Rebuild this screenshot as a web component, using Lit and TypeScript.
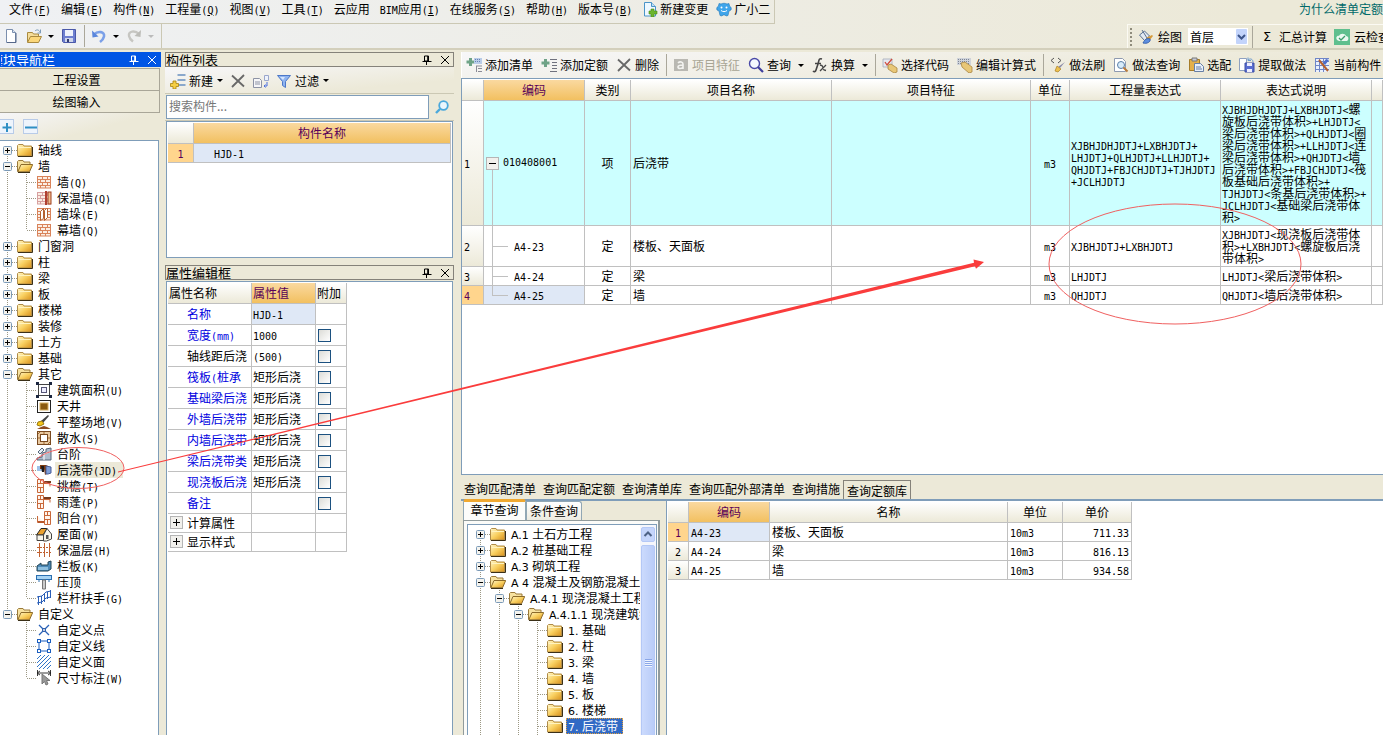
import { LitElement, html, svg, css, nothing, TemplateResult } from "lit";
import { customElement, state } from "lit/decorators.js";

type Glyph = TemplateResult<2>;

const brick = (c: string) => svg`<rect x="1" y="2" width="14" height="12" fill="#fbeee4"/><path d="M1 2.500h14M1 5.500h14M1 8.500h14M1 11.500h14M1 14h14M1.500 2v12M14.500 2v12M6.500 3v2M11.500 3v2M4.500 6v2M9.500 6v2M6.500 9v2M11.500 9v2M4.500 12v2M9.500 12v2" stroke=${c} fill="none"/>`;

const GLYPHS: Record<string, Glyph> = {
  folder: svg`<path d="M.5 3.500l1-1h4.500l1 1.500h7.500v10H.5z" fill="url(#gold)" stroke="#b08c48"/><path d="M1.500 5.500h12.500" stroke="#fff3bf"/><path d="M1 14.500h14.500V5" stroke="#3b3018" fill="none"/>`,
  folderOpen: svg`<path d="M.5 13.500V3.500l1-1h4.500l1 1.500h6v2.500" fill="#f7e2a0" stroke="#9b7a3a"/><path d="M.8 13.800l3.200-7.300h11.700l-3.200 7.300z" fill="url(#gold)" stroke="#8b6a2a"/><path d="M1 14.500h12" stroke="#3b3018"/>`,
  brick: brick("#d9835a"),
  brickWarm: svg`${brick("#d7a0a0")}<rect x="9" y="1" width="2" height="14" fill="#b04030"/><rect x="12" y="2" width="3" height="12" fill="#f0c090" stroke="#a04020"/>`,
  pier: svg`${brick("#d9835a")}<path d="M4.500 5.500l3-3v10l-3 2zM8.500 4.500l2-2h1v9l-3 3z" fill="#fff" stroke="#b5602f"/>`,
  area: svg`<rect x="2.500" y="2.500" width="11" height="11" fill="#fff" stroke="#444"/><rect x="5.500" y="5.500" width="5" height="5" fill="#eef" stroke="#557"/><path d="M0 0h3v3H0zM13 0h3v3h-3zM0 13h3v3H0zM13 13h3v3h-3z" fill="#1b2640"/>`,
  court: svg`<rect x="1.500" y="2.500" width="13" height="12" fill="#fff" stroke="#222"/><rect x="4" y="5" width="8" height="7" fill="#8a5a10" stroke="#d8b060"/>`,
  ground: svg`<path d="M5 7l7-6 1 1-6 7z" fill="#444"/><path d="M2 8l4-1 2 3-4 2-3-1z" fill="#f5c518" stroke="#9a7a10"/><path d="M1 15l4-2 3-1 3 1 4 2z" fill="#8c4a20"/>`,
  apron: svg`<rect x="1.500" y="1.500" width="13" height="13" fill="#e8c8a0" stroke="#7a4a20"/><rect x="4.500" y="4.500" width="7" height="7" fill="#fff" stroke="#7a4a20"/><path d="M2 4l2-2M2 8h2M12 8h2M8 2v2M8 12v2M12 14l2-2" stroke="#a06a30"/>`,
  steps: svg`<path d="M1 12l5-1V7l4-1V3l5-1v12H1z" fill="#aebccc" stroke="#56677a"/><path d="M2 6l4-4 2 2-4 4z" fill="#e6edf4" stroke="#56677a"/><path d="M8 14V8l6-2" stroke="#fff" fill="none"/>`,
  strip: svg`<path d="M1 4h5v5H1z" fill="#9fc0e8"/><path d="M4 3h6l2 1v7l-3 2-1-6H4z" fill="#7b3b12"/><path d="M5 4h3v6H6z" fill="#1f1a1a"/><path d="M10 4l5 1v6l-3 1H10z" fill="#7f9fd8" stroke="#4a5f98"/>`,
  eave: svg`<path d="M1.500 1.500h6v13h-6zM1 5.500h7M1 9.500h7M4.500 2v3M4.500 10v4M8 3.500h6M8 5.500h6v3" fill="#fff4ec" stroke="#c8683a"/><path d="M8 3h7v2H8z" fill="#7a3a1a"/>`,
  balcony: svg`<path d="M8.500 1.500h6v13h-6zM8 5.500h7M8 9.500h7M11.500 2v3M11.500 10v4M1.500 6v6.500H8" fill="#fff4ec" stroke="#c8683a"/><path d="M2 11h6v2H2z" fill="#b8572a"/>`,
  roof: svg`<path d="M.5 9L5 2.500h6L7 9z" fill="#e9a030" stroke="#222"/><path d="M7.500 9l3.500-6.500L15.500 8v5l-5 2H7.500zM1 9v5.500h6.500V9z" fill="#f7f4ea" stroke="#444"/><rect x="10" y="9" width="2.500" height="4" fill="#555"/>`,
  insul: svg`<path d="M3.500 1v14M8.500 1v14M13.500 1v14" stroke="#c06030"/><path d="M1 5.500h14M1 10.500h14" stroke="#c06030" stroke-dasharray="2 1"/>`,
  slab: svg`<path d="M1 8l4-3v2h7V4l3-1v8l-3 2H1z" fill="#4d8ab8" stroke="#245"/><path d="M2 9h10v3H2z" fill="#8fc0e0"/>`,
  cap: svg`<rect x=".5" y="1.500" width="15" height="4" fill="#a8d4f4" stroke="#2b6fb0"/><path d="M6.500 6h3v9h-3z" fill="#ccc" stroke="#777"/><path d="M3 6v2M13 6v2" stroke="#2b6fb0"/>`,
  rail: svg`<path d="M1 7l5-1 4-4 5-1M1 13l5-1 4-4 5-1M2.500 6v9M5.500 6v8M8.500 4v8M11.500 2v7M14.500 0v8" fill="none" stroke="#2b5fb8"/>`,
  point: svg`<path d="M3 3l10 10M13 3L3 13" stroke="#2a62b8" stroke-width="1.300"/><circle cx="8" cy="8" r="1.500" fill="#fff" stroke="#1c4fa0"/>`,
  line: svg`<rect x="3" y="3" width="10" height="10" fill="none" stroke="#1c5fc0"/><path d="M1 1h4v4H1zM11 1h4v4h-4zM1 11h4v4H1zM11 11h4v4h-4z" fill="#1c5fc0"/><path d="M2 2h2v2H2zM12 2h2v2h-2zM2 12h2v2H2zM12 12h2v2h-2z" fill="#fff"/>`,
  face: svg`<path d="M1 5l4-4M1 9l8-8M1 13l12-12M3 15L15 3M7 15l8-8M11 15l4-4" stroke="#2f74c8"/>`,
  dim: svg`<path d="M1.500 0v6M14.500 0v6M1 3h14M1 3l3-2M1 3l3 2M15 3l-3-2M15 3l-3 2" stroke="#222" stroke-width=".9"/><path d="M6 4v10l2.500-2.500L10 15l2-1-1.500-3.500H14z" fill="#999" stroke="#777"/>`,
  page: svg`<path d="M3.500 1.500h6l3 3v10h-9z" fill="#fff" stroke="#7b8fae"/><path d="M9.500 1.500v3h3" fill="#dce6f4" stroke="#7b8fae"/><path d="M4 14.500h9V5" stroke="#56688a" fill="none"/>`,
  open: svg`<path d="M1.500 14V4.500h5l1 1.500h5v2" fill="#f5dd9a" stroke="#a98a40"/><path d="M1.500 14.500l3-6h11l-3 6z" fill="#fbd77a" stroke="#a98a40"/><path d="M9 3c2-2 4-1 5 1M14.500 1.500V5h-3" fill="none" stroke="#7a9ab8"/>`,
  save: svg`<path d="M1.500 1.500h13v13h-12l-1-1z" fill="#6d7fd0" stroke="#4a58a8"/><rect x="4" y="2" width="8" height="6" fill="#eef2fb"/><rect x="4" y="10" width="8" height="4" fill="#cfd6ea"/><rect x="6" y="11" width="2" height="3" fill="#333c70"/>`,
  undo: svg`<path d="M3 6.500c4-4 11-3 10 2-.5 2.500-2 4-4 5.500" fill="none" stroke="#7ba0e8" stroke-width="2.600"/><path d="M1 2.500l.5 7 6-1z" fill="#5a86dc"/>`,
  redo: svg`<path d="M13 6C9 2 2 3 3 8c.5 2.500 2 4 4 5.500" fill="none" stroke="#c6c6c2" stroke-width="2.400"/><path d="M15 2l-.5 7-6-1z" fill="#bcbcb8"/>`,
  docPlus: svg`<path d="M2.500 1.500h7l4 4v9.500h-11z" fill="#eef8ff" stroke="#4a94c8"/><path d="M9.500 1.500v4h4" fill="#bfe0f5" stroke="#4a94c8"/><path d="M9 8h3v2h3v3h-3v3H9v-3H7v-3h2z" fill="#6cb52d" stroke="#4a8a1a" stroke-width=".6"/>`,
  robot: svg`<path d="M3 2.500l2 .5c2-1 4-1 6 0l2-.5.5 2.500c2 1 2 3 1.500 4l-2 1-1 4.500-2 .5-1-1H7l-1 1-2-.5L3 10 1 9C.5 8 .5 6 2.500 5z" fill="#3fa5ea" stroke="#2478b8" stroke-width=".6"/><circle cx="5.500" cy="6.500" r="1" fill="#fff"/><circle cx="10.500" cy="6.500" r="1" fill="#fff"/><path d="M5 9.500c2 1.500 4 1.500 6 0" stroke="#fff" fill="none"/>`,
  paint: svg`<path d="M1.500 6l5-4 5 5-5 4.500z" fill="#e2e9f2" stroke="#5a7090"/><path d="M4 1l5 8" stroke="#5a7090"/><path d="M8 9l6-3 1 1-4 5z" fill="#d69a3a"/><path d="M5 14c2-4 4-5 7-4 1 3-3 5-7 4z" fill="#5d8fe0" stroke="#3a64b0"/>`,
  check: svg`<rect width="16" height="16" fill="#5fbf8e"/><path d="M3 11c-2-3 1-5 2-4 1-3 6-3 7 0 3 0 3 4 1 5H5z" fill="#e9f8f0"/><path d="M5 9l2 2 4-4" stroke="#3a9c6a" fill="none" stroke-width="1.300"/>`,
  addRow: svg`<path d="M7.500 2h8M7.500 7h8M7.500 12h8" stroke="#8aa8cc" stroke-width="2.200"/><path d="M3 8h3v2.500h2.500v3H6V16H3v-2.500H.5v-3H3z" fill="#f6cf45" stroke="#a98410" stroke-width=".8"/>`,
  cross: svg`<path d="M2 2.500l12 11M14 2L2 14" stroke="#686868" stroke-width="1.800" fill="none"/>`,
  copy: svg`<path d="M.5 5.500h6l2 2v7h-8zM2 9h5M2 11h5" fill="#f6f6f8" stroke="#8d93a5"/><path d="M11.500 2.500h4v5h-4z" fill="#eef2fb" stroke="#9aa6cc"/><path d="M14 9v4h-3M12.500 11.500L11 13l1.500 1.500" stroke="#4a6ee0" fill="none"/>`,
  filter: svg`<path d="M1.500 2.500h13l-5 6v6l-3-2v-4z" fill="#8fb4f0" stroke="#4d78c8"/><path d="M4 4h5l-2 3z" fill="#d8e6fc"/>`,
  search: svg`<path d="M6 10l-4 4" stroke="#4aa8dc" stroke-width="2.400"/><circle cx="9.500" cy="6.500" r="4.300" fill="#eaf6fd" stroke="#4aa8dc" stroke-width="1.800"/>`,
  addList: svg`<path d="M3 1h3v2.500h2.500v3H6V9H3V6.500H.5v-3H3z" fill="#6fa387"/><path d="M8 1h8v6H8z" fill="#b9cce8"/><path d="M9 2.500h6M9 4.500h6" stroke="#6783b5" stroke-dasharray="1 1"/><path d="M10 9h6M12 11.500h4M12 14.500h4M10.500 9v6" stroke="#8b8b96"/>`,
  addQuota: svg`<path d="M3 2h3v2.500h2.500v3H6V10H3V7.500H.5v-3H3z" fill="#6fa387"/><path d="M9 2.500h7M11 5.500h5M11 8.500h5M11 11.500h5M9 14.500h7" stroke="#70727e"/>`,
  feature: svg`<rect x="1" y="2" width="14" height="12" fill="#b9b8b2"/><path d="M5 6c2-2 5-1 5 1v5M10 8c-3 0-5 0-5 2s4 2 5 0" fill="none" stroke="#f3f3f0" stroke-width="1.600"/>`,
  magnify: svg`<circle cx="6.500" cy="6.500" r="5" fill="#f4f8ff" stroke="#4a4aa8" stroke-width="1.400"/><path d="M10 10l5 5" stroke="#3f3f9c" stroke-width="2.200"/>`,
  fx: svg`<path d="M10 2c-3-1-3 1-4 5l-2 6c-.5 2-2 2-3 1M3 6.500h6" fill="none" stroke="#444" stroke-width="1.600"/><path d="M8 8l2 .5 2 4.500 2 .5M14 8l-6 6" fill="none" stroke="#444" stroke-width="1.300"/>`,
  pickCode: svg`<path d="M1 2h9v8H1z" fill="#e6e9f0" stroke="#a5abba" stroke-width=".8"/><path d="M3 5l2 3 5-6" stroke="#d04a3a" fill="none" stroke-width="1.300"/><path d="M6 8l3-1 6 4v4l-3 1-6-4z" fill="#e8c777" stroke="#a98540" stroke-width=".8"/>`,
  editExp: svg`<path d="M0 1h14v7H0z" fill="#cfd3da"/><path d="M1 2.500h12M1 4.500h12M1 6.500h12" stroke="#7d8696" stroke-dasharray="1 1"/><path d="M4 6l4-1 7 5v5l-3 1-7-6z" fill="#e8c777" stroke="#a98540" stroke-width=".8"/>`,
  brush: svg`<path d="M4 1L1 3.500 4 6M8 1l3 2.500L8 6" stroke="#555" fill="none"/><path d="M15 5l-5 6-2-1z" fill="#8a8aa8"/><path d="M7 9l4 3-3 3-3-1z" fill="#eec14e" stroke="#a8802a" stroke-width=".7"/>`,
  docFind: svg`<path d="M1.500 1.500h8l3 3v10h-11z" fill="#fff" stroke="#8e9ab0"/><circle cx="8" cy="8" r="3.500" fill="#d8ecfa" stroke="#5b7fa8"/><path d="M10.500 10.500l4 4" stroke="#b87a3a" stroke-width="2"/>`,
  paste: svg`<path d="M1.500 2.500h10v11h-10z" fill="#e3b04a" stroke="#a67c28"/><path d="M4 1h5v3H4z" fill="#c7cbd6" stroke="#777"/><path d="M6.500 6.500h6l3 3v5h-9z" fill="#e8f0fa" stroke="#667fa5"/><path d="M8 10h5M8 12h6" stroke="#667fa5"/>`,
  extract: svg`<path d="M.5 1.500h7v12h-7z" fill="#fff" stroke="#8ea0c0"/><path d="M6 6h9v9H6z" fill="#5a6ed0" stroke="#3d4fa5"/><path d="M8 6h5v3H8zM8 12h5v3H8z" fill="#eef"/><path d="M9 3c2-2 5-1 5 2M9 .5v3h3" stroke="#6a9ad0" fill="none"/>`,
  gridEdit: svg`<path d="M1 1h14v14H1z" fill="#eaf0fb"/><path d="M1.500 1v14M5.500 1v14M9.500 1v14M1 4.500h14M1 8.500h14M1 12.500h14M1 1.500h14" stroke="#6f86c8"/><path d="M5 3l9 11" stroke="#b5602f" stroke-width="2"/><path d="M9 6l3-4 3 1-4 5z" fill="#4d6cc8"/>`,
  plus: svg`<rect x=".5" y=".5" width="14" height="14" fill="#eef4fc" stroke="#b8cbe8"/><path d="M8 4v9M3.500 8.500h9" stroke="#2f8fc4" stroke-width="2"/>`,
  minus: svg`<rect x=".5" y=".5" width="14" height="14" fill="#eef4fc" stroke="#b8cbe8"/><path d="M2 8.500h12" stroke="#2f8fc4" stroke-width="2"/>`,
  pin: svg`<path d="M5.500 4v5h4V4zM3.500 9.500h9M7.500 10v3M8.700 4v5" fill="none" stroke="currentColor"/>`,
  close: svg`<path d="M4 4l8 8M12 4l-8 8" stroke="currentColor"/>`,
};

const icon = (name: string) =>
  html`<svg class="ico" viewBox="0 0 16 16" width="16" height="16" aria-hidden="true">${GLYPHS[name]}</svg>`;

/** Half-width runs are set in a monospaced face that is half as wide as a full-width character. */
const mix = (text: string) =>
  text
    .split(/([\x21-\x7e]+)/)
    .map((part, i) => (i % 2 ? html`<span class="half">${part}</span>` : part));

const MENUS: [string, string][] = [
  ["文件", "F"], ["编辑", "E"], ["构件", "N"], ["工程量", "Q"], ["视图", "V"], ["工具", "T"],
  ["云应用", ""], ["BIM应用", "I"], ["在线服务", "S"], ["帮助", "H"], ["版本号", "B"],
];

interface Node {
  label: string;
  icon?: string;
  open?: boolean;
  children?: Node[];
  mark?: "soft" | "strong";
}
const closed = (label: string): Node => ({ label, children: [] });
const leaf = (label: string, ic: string, mark?: "soft" | "strong"): Node => ({ label, icon: ic, mark });

const NAV: Node[] = [
  closed("轴线"),
  { label: "墙", open: true, children: [leaf("墙(Q)", "brick"), leaf("保温墙(Q)", "brickWarm"), leaf("墙垛(E)", "pier"), leaf("幕墙(Q)", "brick")] },
  ...["门窗洞", "柱", "梁", "板", "楼梯", "装修", "土方", "基础"].map(closed),
  {
    label: "其它", open: true, children: [
      leaf("建筑面积(U)", "area"), leaf("天井", "court"), leaf("平整场地(V)", "ground"), leaf("散水(S)", "apron"),
      leaf("台阶", "steps"), leaf("后浇带(JD)", "strip", "soft"), leaf("挑檐(T)", "eave"), leaf("雨蓬(P)", "eave"),
      leaf("阳台(Y)", "balcony"), leaf("屋面(W)", "roof"), leaf("保温层(H)", "insul"), leaf("栏板(K)", "slab"),
      leaf("压顶", "cap"), leaf("栏杆扶手(G)", "rail"),
    ],
  },
  { label: "自定义", open: true, children: [leaf("自定义点", "point"), leaf("自定义线", "line"), leaf("自定义面", "face"), leaf("尺寸标注(W)", "dim")] },
];

const CHAPTERS: Node[] = [
  closed("A.1 土石方工程"),
  closed("A.2 桩基础工程"),
  closed("A.3 砌筑工程"),
  {
    label: "A 4 混凝土及钢筋混凝土工程", open: true, children: [
      {
        label: "A.4.1 现浇混凝土工程", open: true, children: [
          {
            label: "A.4.1.1 现浇建筑物混凝土", open: true, children: [
              leaf("1. 基础", "folder"), leaf("2. 柱", "folder"), leaf("3. 梁", "folder"), leaf("4. 墙", "folder"),
              leaf("5. 板", "folder"), leaf("6. 楼梯", "folder"), leaf("7. 后浇带", "folder", "strong"), leaf("8. 其它", "folder"),
            ],
          },
          closed("A.4.1.2 现浇构筑物"),
        ],
      },
      closed("A.4.2 预制混凝土"),
    ],
  },
  closed("A.5 木结构工程"),
];

const cell = (up: boolean, down: boolean, right: boolean, box = "") => svg`
  ${up ? svg`<path d="M9.500 0v8" />` : nothing}
  ${down ? svg`<path d="M9.500 8v8" />` : nothing}
  ${right ? svg`<path d="M10 8.500h9" />` : nothing}
  ${box ? svg`<rect class="boxed" x="5.500" y="4.500" width="8" height="8" rx="1"/><path class="sign" d=${box === "+" ? "M7 8.500h5M9.500 6v5" : "M7 8.500h5"} />` : nothing}`;
const track = (content: Glyph) => html`<svg class="track" width="19" height="16" viewBox="0 0 19 16">${content}</svg>`;

const drawTree = (nodes: Node[], latin: (s: string) => unknown, rails: boolean[] = []): TemplateResult[] =>
  nodes.flatMap((n, i) => {
    const last = i === nodes.length - 1;
    const first = i === 0 && rails.length === 0;
    const row = html`<div class="node" role="treeitem" aria-level=${rails.length + 1}>
      ${rails.map((r) => track(cell(r, r, false)))}
      ${track(cell(!first, !last, true, n.children ? (n.open ? "-" : "+") : ""))}
      ${icon(n.icon ?? (n.open ? "folderOpen" : "folder"))}
      <span class="label ${n.mark ?? ""}">${latin(n.label)}</span>
    </div>`;
    return [row, ...(n.open ? drawTree(n.children!, latin, [...rails, !last]) : [])];
  });

const PROPS: [string, string, string][] = [
  ["宽度(mm)", "1000", "b"], ["轴线距后浇", "(500)", ""], ["筏板(桩承", "矩形后浇", "b"], ["基础梁后浇", "矩形后浇", "b"],
  ["外墙后浇带", "矩形后浇", "b"], ["内墙后浇带", "矩形后浇", "b"], ["梁后浇带类", "矩形后浇", "b"], ["现浇板后浇", "矩形后浇", "b"],
  ["备注", "", "b"],
];

const ITEMS = [
  {
    code: "010408001", kind: "项", name: "后浇带", cls: "root",
    exp: "XJBHJDHJDTJ+LXBHJDTJ+\nLHJDTJ+QLHJDTJ+LLHJDTJ+\nQHJDTJ+FBJCHJDTJ+TJHJDTJ\n+JCLHJDTJ",
    note: "XJBHJDHJDTJ+LXBHJDTJ<螺\n旋板后浇带体积>+LHJDTJ<\n梁后浇带体积>+QLHJDTJ<圈\n梁后浇带体积>+LLHJDTJ<连\n梁后浇带体积>+QHJDTJ<墙\n后浇带体积>+FBJCHJDTJ<筏\n板基础后浇带体积>+\nTJHJDTJ<条基后浇带体积>+\nJCLHJDTJ<基础梁后浇带体\n积>",
  },
  { code: "A4-23", kind: "定", name: "楼板、天面板", cls: "sub", exp: "XJBHJDTJ+LXBHJDTJ", note: "XJBHJDTJ<现浇板后浇带体\n积>+LXBHJDTJ<螺旋板后浇\n带体积>" },
  { code: "A4-24", kind: "定", name: "梁", cls: "sub", exp: "LHJDTJ", note: "LHJDTJ<梁后浇带体积>" },
  { code: "A4-25", kind: "定", name: "墙", cls: "sub end", exp: "QHJDTJ", note: "QHJDTJ<墙后浇带体积>" },
];

const QUOTAS = [["A4-23", "楼板、天面板", "711.33"], ["A4-24", "梁", "816.13"], ["A4-25", "墙", "934.58"]];

@customElement("app-root")
export class AppRoot extends LitElement {
  @state() private row = 3;

  static styles = css`
    :host {
      display: flex; flex-direction: column; position: relative; height: 100vh; overflow: hidden;
      background: #ece9d8; color: #000;
      font: 12px/16px "Noto Sans CJK SC", "Noto Sans", sans-serif;
      white-space: nowrap;
    }
    * { box-sizing: border-box; }
    button, input, select { font: inherit; color: inherit; margin: 0; padding: 0; border: 0; background: none; border-radius: 0; }
    .half { font-family: "DejaVu Sans Mono", monospace; font-size: 10px; line-height: 0; }
    .wide { font-family: "DejaVu Sans", sans-serif; font-size: 11px; line-height: 0; }
    .ico { flex: none; display: block; }
    .caret { flex: none; width: 0; border: 3px solid transparent; border-top-color: #000; border-bottom: 0; margin-left: 6px; }
    .caret.off { border-top-color: #bbb; }
    .sep { flex: none; width: 1px; height: 22px; background: #aaa79a; margin: 0 7px; }

    .top { flex: none; background: linear-gradient(90deg, #eff1f4, #ece9d8 90%); }
    .menubar { display: flex; justify-content: space-between; height: 24px; }
    .menus { display: flex; align-items: center; gap: 10px; padding: 0 4px 6px 9px; height: 24px; border: solid #cbc8b4; border-width: 0 1px 1px 0; }
    .menus button { display: flex; align-items: center; gap: 2px; }
    .menus .tail { margin-left: -2px; }
    .help { color: #006a6a; text-decoration: none; padding-top: 1px; }
    .tools { display: flex; justify-content: space-between; height: 26px; border-bottom: 2px solid #d3cfbb; }
    .quick, .calc { display: flex; align-items: center; }
    .quick { width: 162px; padding-left: 3px; border-right: 1px solid #cbc8b4; }
    .quick button { display: flex; align-items: center; margin-right: 7px; }
    .quick .sep { margin: 0 6px 0 0; }
    .calc { width: 256px; overflow: hidden; border: solid #fbfaf3; border-width: 1px 0 0 1px; }
    .calc button { display: flex; align-items: center; gap: 4px; flex: none; }
    .grip { flex: none; width: 2px; height: 18px; margin: 0 6px 0 2px; background: repeating-linear-gradient(#8f8c7c 0 2px, transparent 2px 4px); }
    .pick { position: relative; flex: none; width: 60px; height: 17px; margin: 0 3px 0 6px; background: #fff; }
    .pick select { appearance: none; width: 60px; height: 17px; padding-left: 2px; line-height: 15px; }
    .pick svg { position: absolute; right: 1px; top: 1px; pointer-events: none; }
    .calc .sep { margin: 0 8px 0 1px; }
    .calc .sum { gap: 6px; margin-right: 7px; }
    .sigma { width: 12px; font: 13px/16px "DejaVu Sans", sans-serif; }

    .main { flex: 1; min-height: 0; display: flex; padding-top: 2px; }
    .nav { flex: none; width: 161px; display: flex; flex-direction: column; }
    .title { flex: none; display: flex; align-items: center; height: 15px; font-size: 13px; line-height: 15px; border: 1px solid #85827a; overflow: hidden; }
    .title b { flex: 1; font-weight: 400; }
    .title button { width: 18px; height: 16px; }
    .title button:last-child { margin-right: -2px; }
    .nav .title { background: #0055e5; color: #fff; border-color: #0055e5; }
    .nav .title b { margin-left: -11px; }
    .stack { flex: none; height: 22px; margin-right: 1px; border: solid #a9a698; border-width: 1px 1px 0 0; text-align: center; background: #ece9d8; padding-right: 6px; }
    .stack.gap { margin-top: 1px; }
    .expand { flex: none; display: flex; gap: 8px; align-items: center; height: 28px; margin-right: 1px; padding-top: 1px; border-top: 1px solid #a9a698; background: linear-gradient(165deg, #f6f6f8, #ece9d8 60%); }
    .expand button { height: 16px; }
    .expand button:first-child { margin-left: -1px; }
    .tree { flex: 1; min-height: 0; overflow: hidden; background: #fff; padding-top: 1px; }
    .nav .tree { border: solid #7f9db9; border-width: 1px 1px 0 0; margin-right: 2px; }
    .node { display: flex; align-items: center; height: 16px; margin-left: -2px; }
    .track { flex: none; display: block; }
    .track path { stroke: #9c9884; stroke-dasharray: 1 1; fill: none; }
    .track .boxed { fill: #f4f3ee; stroke: #7b9ab8; }
    .track .sign { stroke: #000; stroke-dasharray: none; }
    .label { margin-left: 3px; padding: 0 2px; line-height: 16px; }
    .label.soft { background: #ece9d8; padding-right: 6px; }
    .label.strong { background: #316ac5; color: #fff; outline: 1px dotted #e0a040; outline-offset: -1px; padding-right: 5px; }

    .mid { flex: none; width: 289px; margin-left: 4px; display: flex; flex-direction: column; }
    .bar { flex: none; display: flex; align-items: center; background: linear-gradient(175deg, #f7f7f9, #ece9d8 75%); }
    .bar button { display: flex; align-items: center; gap: 3px; flex: none; }
    .mid .bar { height: 27px; padding: 1px 0 0 5px; gap: 7px; border-bottom: 1px solid #cbc8b4; }
    .bar .caret { margin-left: 1px; }
    .right .bar .caret { margin-left: 4px; }
    .find { flex: none; display: flex; height: 27px; padding: 1px 0 0 1px; gap: 5px; border-bottom: 1px solid #cbc8b4; align-items: flex-start; }
    .find input { flex: 1; min-width: 0; height: 24px; border: 1px solid #7f9db9; background: #fff; padding: 0 2px 4px; }
    .find input::placeholder { color: #777; opacity: 1; }
    .find button { padding: 4px 3px 0 0; width: 20px; }
    .box { background: #fff; border: 1px solid #7f9db9; padding: 1px; margin: 0 1px; overflow: hidden; }
    .list { flex: none; height: 137px; }
    .props { flex: 1; min-height: 0; margin-top: 1px; border-bottom: 0; }
    .mid .second { margin-top: 7px; }

    table { border-collapse: separate; border-spacing: 0; table-layout: fixed; }
    th, td { height: 19px; padding: 0 2px; border: solid #c0c0c0; border-width: 0 1px 1px 0; font-weight: 400; line-height: 12px; overflow: hidden; text-align: left; }
    thead th { height: 21px; text-align: center; background: linear-gradient(#fff, #ece9d8); line-height: 16px; }
    thead th.on { background: linear-gradient(#fad9a0, #f2c060); color: #580058; }
    tbody th { background: linear-gradient(#fff, #ece9d8); }
    tbody th.on { background: #ffd58d; color: #580058; }
    td.cur { background: #dfe8f6; }
    .c { text-align: center; }
    .r { text-align: right; }
    .full { width: 100%; }
    .propt { width: 179px; }
    .propt th, .propt td { text-align: left; padding-left: 1px; }
    .propt td { height: 21px; line-height: 16px; padding-bottom: 1px; }
    .propt td:first-child { padding-left: 19px; }
    .propt .b { color: #0000e0; }
    .propt .fold td { height: 19px; }
    .propt .fold td:first-child { padding-left: 2px; }
    .fold div, .fold button { display: flex; align-items: center; }
    .fold div { gap: 4px; }
    .sq { flex: none; display: block; }
    .sq rect { fill: #f1f0ec; stroke: #b5b5b5; }
    .sq path { stroke: #000; }
    input[type="checkbox"] { appearance: none; display: block; width: 13px; height: 13px; margin: 1px 0 0 1px; border: 1px solid #1c5180; background: linear-gradient(135deg, #dcdcd7, #fff); }
    input[type="checkbox"]:checked { background: #1c5180; }

    .right { flex: 1; min-width: 0; margin-left: 7px; display: flex; flex-direction: column; overflow: hidden; }
    .right .bar { height: 26px; padding-left: 4px; gap: 8px; border-left: 1px solid #fff; overflow: hidden; }
    .right .bar .sep { margin: 0 -2px 0 -1px; }
    .right .bar .dim { color: #a8a594; }
    .work { flex: none; height: 397px; background: #fff; border: solid #7f9db9; border-width: 1px 0 1px 1px; padding-top: 1px; }
    .work tbody tr:first-child { height: 125px; }
    .work tbody tr:first-child td { background-color: #ccffff; }
    .work tbody tr:nth-child(2) { height: 41px; }
    .work td.pre { white-space: pre; padding: 0 0 0 1px; }
    .work .tri { background-repeat: no-repeat; background-image: linear-gradient(#c0c0c0, #c0c0c0), linear-gradient(#c0c0c0, #c0c0c0); }
    .work .root { background-size: 1px 50%, 0 0; background-position: 8px 100%, 0 0; }
    .work .sub { background-size: 1px 100%, 16px 1px; background-position: 8px 0, 8px 50%; padding-left: 30px; }
    .work .end { background-size: 1px 50%, 16px 1px; background-position: 8px 0, 8px 50%; }
    .root button { display: flex; align-items: center; gap: 4px; }

    .tabs { flex: none; display: flex; gap: 7px; height: 26px; padding: 5px 0 0 3px; border-bottom: 2px solid #7f9db9; }
    .tabs button { height: 18px; line-height: 18px; }
    .tabs .on { border: 1px solid #85827a; border-bottom: 0; padding: 2px 3px 0; margin-left: -4px; height: 19px; line-height: 16px; }
    .query { flex: 1; min-height: 0; display: flex; }
    .side { flex: none; width: 201px; display: flex; flex-direction: column; padding-left: 2px; }
    .sub-tabs { flex: none; display: flex; align-items: flex-end; height: 21px; margin-top: -2px; }
    .sub-tabs button { height: 19px; width: 56px; border: 1px solid #91a7b4; border-bottom: 0; border-radius: 0 3px 0 0; background: linear-gradient(#fff, #edebe0); line-height: 18px; }
    .sub-tabs .on { height: 21px; width: 63px; border-top: 3px solid #f0a830; background: #fcfcfa; border-radius: 3px 3px 0 0; line-height: 14px; padding-bottom: 3px; }
    .pane { flex: 1; min-height: 0; display: flex; margin-right: 2px; padding: 3px 1px 0 3px; border: solid #919b9c; border-width: 1px 2px 0 1px; background: #fbfbf8; }
    .frame { flex: 1; min-width: 0; display: flex; border: solid #7f9db9; border-width: 1px 1px 0 1px; background: #fff; }
    .frame .tree { min-width: 0; padding-left: 5px; }
    .scroll { flex: none; width: 16px; display: flex; flex-direction: column; gap: 3px; padding: 2px 1px 0; background: #f5f6fb; }
    .scroll button { flex: none; width: 14px; height: 15px; background: #c5d5fb; border: 1px solid #b4c8f6; border-radius: 2px; }
    .scroll .thumb { flex: none; height: 236px; border-radius: 2px; background: linear-gradient(90deg, #cbdafd, #b9ccf8); border: 1px solid #b4c8f6; display: grid; place-items: center; }
    .grips { width: 7px; height: 8px; background: repeating-linear-gradient(#8aa6e8 0 1px, #eef4fe 1px 2px); }
    .result { flex: 1; min-width: 0; background: #fff; border-left: 1px solid #7f9db9; margin-left: 4px; padding: 1px 0 0 1px; overflow: hidden; }
    .result table { width: 464px; }
    .overlay { position: absolute; left: 0; top: 0; pointer-events: none; }
  `;

  private titleBar(text: string, cls = "") {
    return html`<div class="title ${cls}"><b>${text}</b><button aria-label="固定">${icon("pin")}</button><button aria-label="关闭">${icon("close")}</button></div>`;
  }

  private tool(ic: string, text: string, caret = false, cls = "") {
    return html`<button class=${cls}>${icon(ic)}<span>${text}</span>${caret ? html`<i class="caret"></i>` : nothing}</button>`;
  }

  private square(sign: string) {
    return html`<svg class="sq" width="13" height="13" viewBox="0 0 13 13"><rect x=".5" y=".5" width="12" height="12"/><path d=${sign === "+" ? "M3 6.500h7M6.500 3v7" : "M3 6.500h7"} /></svg>`;
  }

  render() {
    const latin = (s: string) => {
      const cut = s.lastIndexOf(" ") + 1;
      return html`<span class="wide">${s.slice(0, cut)}</span>${s.slice(cut)}`;
    };
    return html`
      <header class="top">
        <div class="menubar">
          <nav class="menus">
            ${MENUS.map(([t, k]) => html`<button><span>${mix(t)}${k ? html`<span class="half">(<u>${k}</u>)</span>` : nothing}</span></button>`)}
            <button>${icon("docPlus")}新建变更</button>
            <button class="tail">${icon("robot")}广小二</button>
          </nav>
          <a class="help" href="#">为什么清单定额</a>
        </div>
        <div class="tools">
          <div class="quick">
            <button aria-label="新建">${icon("page")}</button>
            <button aria-label="打开">${icon("open")}<i class="caret"></i></button>
            <button aria-label="保存">${icon("save")}</button>
            <i class="sep"></i>
            <button aria-label="撤销">${icon("undo")}<i class="caret"></i></button>
            <button aria-label="恢复" disabled>${icon("redo")}<i class="caret off"></i></button>
          </div>
          <div class="calc">
            <i class="grip"></i>
            <button>${icon("paint")}绘图</button>
            <div class="pick">
              <select aria-label="楼层"><option>首层</option></select>
              <svg width="11" height="15" viewBox="0 0 11 15"><rect width="11" height="15" rx="1" fill="#c3d4fb"/><path d="M2 6l3.500 3.500L9 6" fill="none" stroke="#3c5488" stroke-width="2"/></svg>
            </div>
            <i class="sep"></i>
            <button class="sum"><span class="sigma">Σ</span>汇总计算</button>
            <button>${icon("check")}云检查</button>
          </div>
        </div>
      </header>

      <main class="main">
        <aside class="nav">
          ${this.titleBar("模块导航栏")}
          <button class="stack gap">工程设置</button>
          <button class="stack">绘图输入</button>
          <div class="expand">
            <button aria-label="全部展开">${icon("plus")}</button>
            <button aria-label="全部折叠">${icon("minus")}</button>
          </div>
          <div class="tree" role="tree">${drawTree(NAV, mix)}</div>
        </aside>

        <section class="mid">
          ${this.titleBar("构件列表")}
          <div class="bar">
            ${this.tool("addRow", "新建", true)}
            <button aria-label="删除">${icon("cross")}</button>
            <button aria-label="复制">${icon("copy")}</button>
            ${this.tool("filter", "过滤", true)}
          </div>
          <div class="find">
            <input type="text" aria-label="搜索构件" placeholder="搜索构件..." />
            <button aria-label="搜索">${icon("search")}</button>
          </div>
          <div class="box list">
            <table class="full">
              <colgroup><col width="26" /><col /></colgroup>
              <thead><tr><th></th><th class="on">构件名称</th></tr></thead>
              <tbody><tr><th class="c on">${mix("1")}</th><td class="cur">&emsp;&ensp;${mix("HJD-1")}</td></tr></tbody>
            </table>
          </div>
          ${this.titleBar("属性编辑框", "second")}
          <div class="box props">
            <table class="propt">
              <colgroup><col width="84" /><col width="64" /><col width="31" /></colgroup>
              <thead><tr><th>属性名称</th><th class="on">属性值</th><th>附加</th></tr></thead>
              <tbody>
                <tr><td class="b">名称</td><td class="cur">${mix("HJD-1")}</td><td></td></tr>
                ${PROPS.map(([n, v, c]) => html`<tr><td class=${c}>${mix(n)}</td><td>${mix(v)}</td><td><input type="checkbox" aria-label=${n} /></td></tr>`)}
                ${["计算属性", "显示样式"].map((n) => html`<tr class="fold"><td><div><button aria-label="展开">${this.square("+")}</button>${n}</div></td><td></td><td></td></tr>`)}
              </tbody>
            </table>
          </div>
        </section>

        <section class="right">
          <div class="bar">
            ${this.tool("addList", "添加清单")}${this.tool("addQuota", "添加定额")}${this.tool("cross", "删除")}
            <i class="sep"></i>
            ${this.tool("feature", "项目特征", false, "dim")}${this.tool("magnify", "查询", true)}${this.tool("fx", "换算", true)}
            <i class="sep"></i>
            ${this.tool("pickCode", "选择代码")}${this.tool("editExp", "编辑计算式")}
            <i class="sep"></i>
            ${this.tool("brush", "做法刷")}${this.tool("docFind", "做法查询")}${this.tool("paste", "选配")}${this.tool("extract", "提取做法")}${this.tool("gridEdit", "当前构件")}
          </div>
          <div class="work">
            <table class="full">
              <colgroup><col width="22" /><col width="101" /><col width="46" /><col width="201" /><col width="199" /><col width="39" /><col width="151" /><col width="151" /><col /></colgroup>
              <thead><tr><th></th><th class="on">编码</th><th>类别</th><th>项目名称</th><th>项目特征</th><th>单位</th><th>工程量表达式</th><th>表达式说明</th><th></th></tr></thead>
              <tbody>
                ${ITEMS.map((it, i) => html`<tr @click=${() => (this.row = i)}>
                  <th class=${i === this.row ? "on" : ""}>${mix(String(i + 1))}</th>
                  <td class="tri ${it.cls} ${i === this.row ? "cur" : ""}">${i ? mix(it.code) : html`<button>${this.square("-")}${mix(it.code)}</button>`}</td>
                  <td class="c">${it.kind}</td><td>${it.name}</td><td></td>
                  <td class="c">${mix("m3")}</td><td class="pre">${mix(it.exp)}</td><td class="pre">${mix(it.note)}</td><td></td>
                </tr>`)}
              </tbody>
            </table>
          </div>
          <div class="tabs">
            ${["查询匹配清单", "查询匹配定额", "查询清单库", "查询匹配外部清单", "查询措施"].map((t) => html`<button>${t}</button>`)}
            <button class="on">查询定额库</button>
          </div>
          <div class="query">
            <div class="side">
              <div class="sub-tabs"><button class="on">章节查询</button><button>条件查询</button></div>
              <div class="pane"><div class="frame">
                <div class="tree" role="tree">${drawTree(CHAPTERS, latin)}</div>
                <div class="scroll">
                  <button aria-label="向上"><svg width="12" height="13" viewBox="0 0 12 13"><path d="M2.500 8L6 4.500 9.500 8" fill="none" stroke="#4d6185" stroke-width="2"/></svg></button>
                  <div class="thumb"><div class="grips"></div></div>
                </div>
              </div></div>
            </div>
            <div class="result">
              <table>
                <colgroup><col width="21" /><col width="81" /><col width="238" /><col width="55" /><col width="69" /></colgroup>
                <thead><tr><th></th><th class="on">编码</th><th>名称</th><th>单位</th><th>单价</th></tr></thead>
                <tbody>
                  ${QUOTAS.map(([c, n, p], i) => html`<tr><th class="c ${i ? "" : "on"}">${mix(String(i + 1))}</th><td class=${i ? "" : "cur"}>${mix(c)}</td><td>${n}</td><td>${mix("10m3")}</td><td class="r">${mix(p)}</td></tr>`)}
                </tbody>
              </table>
            </div>
          </div>
        </section>
      </main>

      <svg class="overlay" width="1383" height="735" viewBox="0 0 1383 735" aria-hidden="true">
        <defs><linearGradient id="gold" x1="0" y1="0" x2="1" y2="1"><stop offset="0" stop-color="#fff6cc"/><stop offset=".5" stop-color="#f9d060"/><stop offset="1" stop-color="#d8901c"/></linearGradient></defs>
        <ellipse cx="78" cy="468" rx="46" ry="20.500" fill="none" stroke="#f06060"/>
        <ellipse cx="1175" cy="264" rx="126" ry="60" fill="none" stroke="#f06060"/>
        <path d="M118 471.600L974 262.800L973.500 259.500L984 262L976 268.800L975 266.200L118 472.400z" fill="#fa3c3c"/>
      </svg>
    `;
  }
}
